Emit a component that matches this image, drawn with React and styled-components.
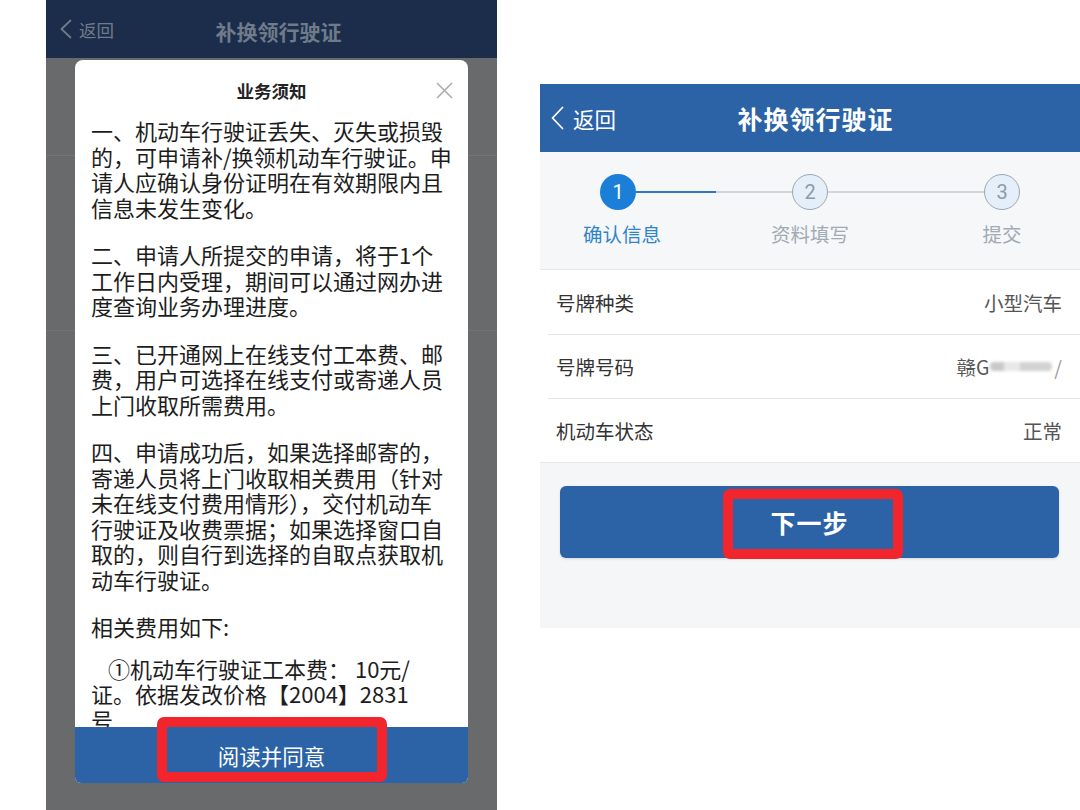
import React from "react";
import styled, { createGlobalStyle } from "styled-components";

const GlobalStyle = createGlobalStyle`
  html, body {
    margin: 0;
    padding: 0;
    background: #ffffff;
    font-family: "Noto Sans CJK SC", "Noto Sans", sans-serif;
  }
  * {
    box-sizing: border-box;
  }
`;

const BLUE = "#2c63a7";

const Page = styled.div`
  display: flex;
  align-items: flex-start;
  gap: 43px;
  padding-left: 46px;
  width: 1080px;
  height: 810px;
  overflow: hidden;
`;

/* ---------- left phone: notice dialog ---------- */

const Phone = styled.div`
  width: 451px;
  height: 810px;
  display: flex;
  flex-direction: column;
  background-color: #696a6b;
  background-image: linear-gradient(#737475, #737475),
    linear-gradient(#717273, #717273);
  background-size: 100% 1px, 100% 1px;
  background-position: 0 155px, 0 330px;
  background-repeat: no-repeat;
`;

const NavBar = styled.div`
  height: ${(p) => p.$h}px;
  flex-shrink: 0;
  display: grid;
  grid-template-columns: 1fr auto 1fr;
  align-items: center;
  padding-left: ${(p) => p.$pad}px;
  background: ${(p) => p.$bg};
  color: ${(p) => p.$fg};
`;

const Back = styled.div`
  display: flex;
  align-items: center;
  gap: ${(p) => p.$gap}px;
  font-size: ${(p) => p.$size}px;
  justify-self: start;
`;

const NavTitle = styled.div`
  font-size: ${(p) => p.$size}px;
  font-weight: 700;
  letter-spacing: ${(p) => p.$ls || 0}px;
  padding-top: ${(p) => p.$pt || 0}px;
`;

const Dialog = styled.div`
  margin: 2px 29px 0;
  height: 723px;
  background: #ffffff;
  border-radius: 8px 8px 6px 6px;
  display: flex;
  flex-direction: column;
`;

const DialogHead = styled.div`
  height: 58px;
  flex-shrink: 0;
  display: grid;
  grid-template-columns: 1fr auto 1fr;
  align-items: center;
  padding-top: 2px;
`;

const DialogTitle = styled.div`
  grid-column: 2;
  font-size: 17.5px;
  font-weight: 700;
  color: #222;
`;

const Close = styled.div`
  justify-self: end;
  padding-right: 15px;
  display: flex;
`;

const DialogBody = styled.div`
  flex: 1;
  overflow: hidden;
  padding: 0 15px 0 16px;
  font-size: 22px;
  line-height: 25.5px;
  color: #1d1d1d;
`;

const Para = styled.p`
  margin: 0 0 ${(p) => p.$mb ?? 22}px;
  text-indent: ${(p) => p.$indent || 0}px;
`;

const DialogButton = styled.div`
  position: relative;
  height: 56px;
  flex-shrink: 0;
  display: flex;
  align-items: center;
  justify-content: center;
  background: ${BLUE};
  color: #ffffff;
  font-size: 21.5px;
  border-radius: 0 0 6px 6px;
`;

const Highlight = styled.div`
  position: absolute;
  left: ${(p) => p.$left}px;
  top: ${(p) => p.$top}px;
  width: ${(p) => p.$w}px;
  height: ${(p) => p.$h}px;
  border: 10px solid #f1252b;
  border-radius: 7px;
  pointer-events: none;
`;

/* ---------- right phone: step page ---------- */

const Panel = styled.div`
  width: 540px;
  height: 544px;
  margin-top: 84px;
  display: flex;
  flex-direction: column;
  background: #f4f6f8;
`;

const Steps = styled.div`
  height: 118px;
  padding-top: 22px;
  background: #f5f7f9;
  border-bottom: 1px solid #e4e7ea;
`;

const CircleRow = styled.div`
  display: flex;
  align-items: center;
  padding: 0 60px;
`;

const Circle = styled.div`
  width: 36px;
  height: 36px;
  border-radius: 50%;
  display: flex;
  align-items: center;
  justify-content: center;
  font-family: Roboto, "Noto Sans", sans-serif;
  font-size: 20px;
  flex-shrink: 0;
  background: ${(p) => (p.$active ? "#1b7fd8" : "#e5eff9")};
  border: ${(p) => (p.$active ? "none" : "1.5px solid #9ba7b3")};
  color: ${(p) => (p.$active ? "#ffffff" : "#8e9aa7")};
`;

const Connector = styled.div`
  flex: 1;
  height: 2px;
  background: ${(p) => p.$fill};
`;

const LabelRow = styled.div`
  display: flex;
  justify-content: space-between;
  padding: 0 18px;
  margin-top: 11px;
`;

const StepLabel = styled.div`
  width: 120px;
  text-align: center;
  font-size: 19.5px;
  line-height: 26px;
  padding-left: ${(p) => (p.$active ? 8 : 0)}px;
  color: ${(p) => (p.$active ? "#2f84c8" : "#a2aab3")};
`;

const Rows = styled.div`
  background: #ffffff;
  border-bottom: 1px solid #e6e8eb;
`;

const Row = styled.div`
  height: 64px;
  display: flex;
  align-items: center;
  justify-content: space-between;
  padding: 0 18px 0 16px;
  font-size: 19.5px;
  & + & {
    border-top: 1px solid #e3e5e8;
    margin-left: 8px;
    padding-left: 8px;
  }
`;

const RowLabel = styled.span`
  color: #333;
`;

const RowValue = styled.span`
  color: #555;
  display: flex;
  align-items: center;
`;

const Masked = styled.span`
  display: inline-block;
  width: 62px;
  height: 9px;
  margin: 0 2px 0 1px;
  border-radius: 4px;
  background: linear-gradient(
    90deg,
    #c9c9c9 0 22%,
    #e8e8e8 22% 48%,
    #d2d2d2 48% 100%
  );
  filter: blur(1.5px);
`;

const Faded = styled.span`
  color: #9a9a9a;
`;

const Footer = styled.div`
  flex: 1;
  padding: 23px 21px 0 20px;
`;

const NextButton = styled.div`
  position: relative;
  height: 72px;
  display: flex;
  align-items: center;
  justify-content: center;
  background: ${BLUE};
  border-radius: 6px;
  color: #ffffff;
  font-size: 25px;
  font-weight: 700;
  letter-spacing: 1px;
  box-shadow: 0 1px 3px rgba(0, 0, 0, 0.12);
`;

function Chevron({ w, h, color }) {
  return (
    <svg width={w} height={h} viewBox={`0 0 ${w} ${h}`} fill="none">
      <polyline
        points={`${w - 1.5},1.5 1.5,${h / 2} ${w - 1.5},${h - 1.5}`}
        stroke={color}
        strokeWidth="1.8"
        strokeLinecap="round"
        strokeLinejoin="round"
      />
    </svg>
  );
}

function CloseIcon() {
  return (
    <svg width="17" height="17" viewBox="0 0 17 17">
      <path d="M1 1 L16 16 M16 1 L1 16" stroke="#acacac" strokeWidth="1.6" />
    </svg>
  );
}

function NoticeDialog() {
  return (
    <Phone>
      <NavBar $h={58} $pad={14} $bg="#1b2d4a" $fg="#6f7a8b">
        <Back $gap={7} $size={17.5}>
          <Chevron w={12} h={20} color="#6f7a8b" />
          返回
        </Back>
        <NavTitle $size={21} $pt={4}>
          补换领行驶证
        </NavTitle>
      </NavBar>
      <Dialog>
        <DialogHead>
          <DialogTitle>业务须知</DialogTitle>
          <Close>
            <CloseIcon />
          </Close>
        </DialogHead>
        <DialogBody>
          <Para>
            一、机动车行驶证丢失、灭失或损毁的，可申请补/换领机动车行驶证。申请人应确认身份证明在有效期限内且信息未发生变化。
          </Para>
          <Para>
            二、申请人所提交的申请，将于1个工作日内受理，期间可以通过网办进度查询业务办理进度。
          </Para>
          <Para>
            三、已开通网上在线支付工本费、邮费，用户可选择在线支付或寄递人员上门收取所需费用。
          </Para>
          <Para>
            四、申请成功后，如果选择邮寄的，寄递人员将上门收取相关费用（针对未在线支付费用情形），交付机动车行驶证及收费票据；如果选择窗口自取的，则自行到选择的自取点获取机动车行驶证。
          </Para>
          <Para $mb={16}>相关费用如下:</Para>
          <Para $indent={17}>
            ①机动车行驶证工本费： 10元/
            <br />
            证。依据发改价格【2004】2831
            <br />号
          </Para>
        </DialogBody>
        <DialogButton>
          阅读并同意
          <Highlight $left={82} $top={-10} $w={230} $h={65} />
        </DialogButton>
      </Dialog>
    </Phone>
  );
}

const steps = [
  { n: 1, label: "确认信息", active: true },
  { n: 2, label: "资料填写" },
  { n: 3, label: "提交" },
];

function StepPage() {
  return (
    <Panel>
      <NavBar $h={68} $pad={11} $bg={BLUE} $fg="#ffffff">
        <Back $gap={9} $size={21.5}>
          <Chevron w={13} h={24} color="#ffffff" />
          返回
        </Back>
        <NavTitle $size={25} $ls={1}>
          补换领行驶证
        </NavTitle>
      </NavBar>
      <Steps>
        <CircleRow>
          <Circle $active>1</Circle>
          <Connector $fill="linear-gradient(90deg, #2b79c2 0 51%, #cfd6dd 51% 100%)" />
          <Circle>2</Circle>
          <Connector $fill="#cfd6dd" />
          <Circle>3</Circle>
        </CircleRow>
        <LabelRow>
          {steps.map((s) => (
            <StepLabel key={s.n} $active={s.active}>
              {s.label}
            </StepLabel>
          ))}
        </LabelRow>
      </Steps>
      <Rows>
        <Row>
          <RowLabel>号牌种类</RowLabel>
          <RowValue>小型汽车</RowValue>
        </Row>
        <Row>
          <RowLabel>号牌号码</RowLabel>
          <RowValue>
            赣G
            <Masked />
            <Faded>/</Faded>
          </RowValue>
        </Row>
        <Row>
          <RowLabel>机动车状态</RowLabel>
          <RowValue>正常</RowValue>
        </Row>
      </Rows>
      <Footer>
        <NextButton>
          下一步
          <Highlight $left={163} $top={3} $w={180} $h={70} />
        </NextButton>
      </Footer>
    </Panel>
  );
}

export default function App() {
  return (
    <>
      <GlobalStyle />
      <Page>
        <NoticeDialog />
        <StepPage />
      </Page>
    </>
  );
}
